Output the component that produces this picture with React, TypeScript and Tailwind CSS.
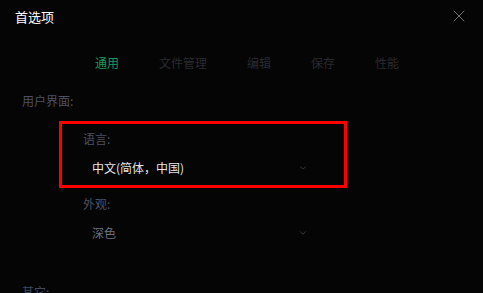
import { ChevronDown, X } from 'lucide-react';

const tabs = ['通用', '文件管理', '编辑', '保存', '性能'];

function Select({ value, bright }: { value: string; bright?: boolean }) {
  return (
    <div className="flex items-center w-[216px] h-[20px] ml-[9px]">
      <span className={`flex-1 ${bright ? 'text-[#e6e6e6]' : 'text-[#6b7080]'}`}>{value}</span>
      <ChevronDown className="w-[10px] h-[10px] text-[#555]" strokeWidth={1.5} />
    </div>
  );
}

export default function App() {
  return (
    <div
      className="w-[483px] h-[293px] overflow-hidden bg-[#050505] text-[12px] leading-none"
      style={{ fontFamily: '"Noto Sans CJK SC", "Noto Sans", sans-serif' }}
    >
      <div className="flex items-center justify-between h-[32px] pl-[15px] pr-[14px]">
        <span className="text-[13px] text-white">首选项</span>
        <X className="w-[20px] h-[20px] text-[#8a8a8a]" strokeWidth={1} />
      </div>

      <div className="flex gap-10 pl-[95px] mt-[24px] h-[14px] items-center">
        {tabs.map((t, i) => (
          <span key={t} className={i === 0 ? 'text-[#179b5c]' : 'text-[#282a30]'}>
            {t}
          </span>
        ))}
      </div>

      <div className="pl-[22px] mt-[24px] h-[14px] flex items-center text-[#4b5163]">用户界面:</div>

      <div className="relative ml-[59px] mt-[13px] w-[288px] h-[67px]">
        <div className="pl-[24px] pt-[11px] text-[#4b5163] h-[14px] flex items-center box-content">语言:</div>
        <div className="pl-[24px] mt-[12px]">
          <Select value="中文(简体，中国)" bright />
        </div>
        <div className="absolute inset-0 border-[3px] border-[#ff0000]" />
      </div>

      <div className="pl-[83px] mt-[9px] h-[14px] flex items-center text-[#4b5163]">外观:</div>
      <div className="pl-[83px] mt-[12px]">
        <Select value="深色" />
      </div>

      <div className="pl-[22px] mt-[42px] h-[14px] flex items-center text-[#3d4a66]">其它:</div>
    </div>
  );
}
